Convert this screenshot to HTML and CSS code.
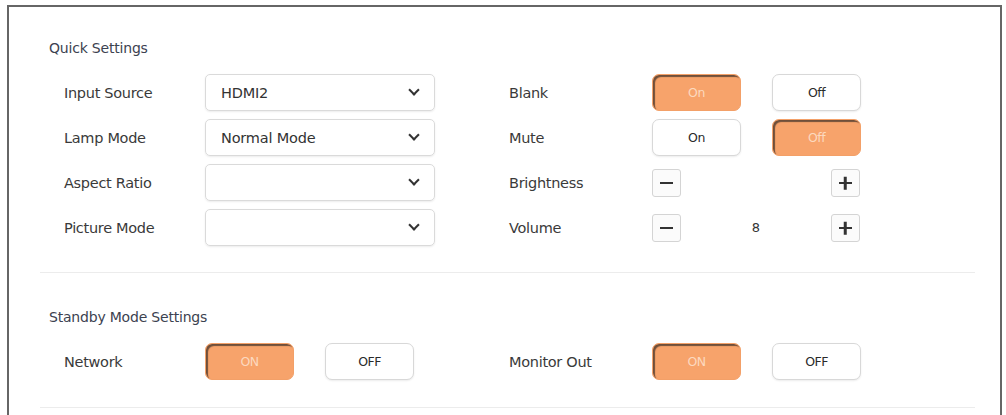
FILE: index.html
```html
<!DOCTYPE html>
<html lang="en">
<head>
  <meta charset="UTF-8">
  <meta name="viewport" content="width=device-width, initial-scale=1.0">
  <title>Projector Settings</title>
  <link rel="stylesheet" href="styles.css">
</head>
<body>
  <div id="panel">

    <div class="section">
      <h3 class="title">Quick Settings</h3>
      <div class="grid">
        <div class="field">
          <span class="label">Input Source</span>
          <div class="select"><span>HDMI2</span><i class="arrow"></i></div>
        </div>
        <div class="field">
          <span class="label">Blank</span>
          <div class="toggle">
            <span class="btn on">On</span>
            <span class="btn">Off</span>
          </div>
        </div>

        <div class="field">
          <span class="label">Lamp Mode</span>
          <div class="select"><span>Normal Mode</span><i class="arrow"></i></div>
        </div>
        <div class="field">
          <span class="label">Mute</span>
          <div class="toggle">
            <span class="btn">On</span>
            <span class="btn on">Off</span>
          </div>
        </div>

        <div class="field">
          <span class="label">Aspect Ratio</span>
          <div class="select"><span></span><i class="arrow"></i></div>
        </div>
        <div class="field">
          <span class="label">Brightness</span>
          <div class="stepper">
            <span class="step minus"></span>
            <span class="value"></span>
            <span class="step plus"></span>
          </div>
        </div>

        <div class="field">
          <span class="label">Picture Mode</span>
          <div class="select"><span></span><i class="arrow"></i></div>
        </div>
        <div class="field">
          <span class="label">Volume</span>
          <div class="stepper">
            <span class="step minus"></span>
            <span class="value">8</span>
            <span class="step plus"></span>
          </div>
        </div>
      </div>
    </div>

    <div class="section standby">
      <h3 class="title">Standby Mode Settings</h3>
      <div class="grid">
        <div class="field">
          <span class="label">Network</span>
          <div class="toggle">
            <span class="btn on">ON</span>
            <span class="btn">OFF</span>
          </div>
        </div>
        <div class="field">
          <span class="label">Monitor Out</span>
          <div class="toggle">
            <span class="btn on">ON</span>
            <span class="btn">OFF</span>
          </div>
        </div>
      </div>
    </div>

  </div>
</body>
</html>
```

FILE: styles.css
```css
*{
  margin: 0;
  padding: 0;
  box-sizing: border-box;
}

body{
  background: #fff;
  font-family: "DejaVu Sans", "Liberation Sans", sans-serif;
  color: #3a3a3a;
}

#panel{
  width: 995px;
  height: 410px;
  margin: 5px 0 0 7px;
  border: 2px solid #666;
  border-bottom: none;
}

.section{
  margin: 0 25px 0 31px;
  padding: 31px 0 26px;
  border-bottom: 1px solid #ececec;
}
.section.standby{
  padding: 34px 0 27px;
}

.title{
  padding-left: 9px;
  font-size: 14px;
  font-weight: normal;
  line-height: 20px;
  color: #3c4250;
  letter-spacing: -0.2px;
}

.grid{
  display: grid;
  grid-template-columns: 371px 351px;
  column-gap: 74px;
  row-gap: 8px;
  margin-top: 16px;
  padding-left: 24px;
}

.field{
  display: flex;
  align-items: center;
  height: 37px;
}

.label{
  flex: none;
  width: 141px;
  font-size: 14.5px;
  color: #3a3a3a;
  letter-spacing: -0.3px;
}
.grid .field:nth-child(2n) .label{
  width: 143px;
}

/* dropdown */
.select{
  display: flex;
  align-items: center;
  justify-content: space-between;
  width: 230px;
  height: 37px;
  padding: 0 16px 0 15px;
  border: 1px solid #dadada;
  border-radius: 5px;
  box-shadow: 0 1px 2px rgba(0,0,0,0.08);
  font-size: 14.5px;
  color: #333;
  letter-spacing: -0.2px;
}
.arrow{
  display: inline-block;
  width: 8px;
  height: 8px;
  margin-top: -5px;
  border-right: 2.5px solid #333;
  border-bottom: 2.5px solid #333;
  transform: rotate(45deg);
}

/* on / off pairs */
.toggle{
  display: flex;
  gap: 31px;
}
.btn{
  display: flex;
  align-items: center;
  justify-content: center;
  width: 89px;
  height: 37px;
  border: 1px solid #d8d8d8;
  border-radius: 7px;
  box-shadow: 0 1px 2px rgba(0,0,0,0.08);
  background: #fff;
  font-size: 12.5px;
  color: #2a2a2a;
  letter-spacing: -0.5px;
}
.btn.on{
  border-color: #f3a068;
  background: #f7a36b;
  color: #fcd9bf;
  box-shadow: inset 2px 2px 1px #6f4f3a;
}

/* minus / plus */
.stepper{
  display: flex;
  align-items: center;
  justify-content: space-between;
  width: 208px;
}
.step{
  position: relative;
  width: 29px;
  height: 28px;
  border: 1px solid #d4d4d4;
  border-radius: 3px;
  background: #fbfbfb;
}
.step::before,
.plus::after{
  content: '';
  position: absolute;
  left: 50%;
  top: 50%;
  width: 13px;
  height: 2.5px;
  margin: -1px 0 0 -6.5px;
  background: #333;
}
.plus::after{
  transform: rotate(90deg);
}
.value{
  font-size: 13px;
  color: #333;
}
```
